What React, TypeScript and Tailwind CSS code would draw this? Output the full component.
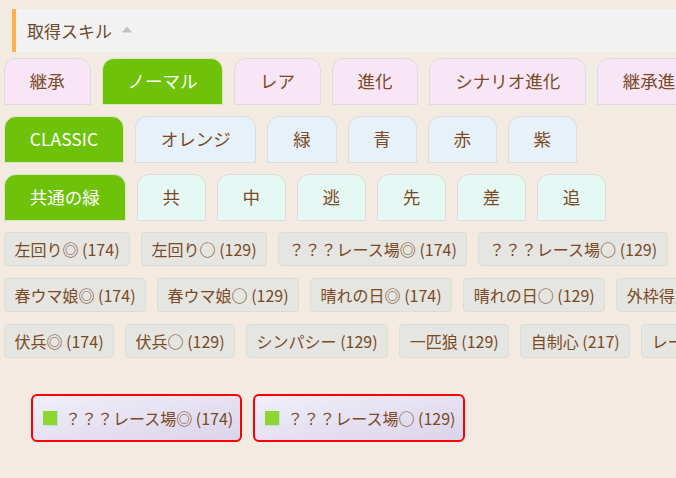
import React from "react";

const font = { fontFamily: '"Noto Sans CJK JP", "Noto Sans", sans-serif' };

type Tab = { label: string; active?: boolean };

const row1: Tab[] = [
  { label: "継承" },
  { label: "ノーマル", active: true },
  { label: "レア" },
  { label: "進化" },
  { label: "シナリオ進化" },
  { label: "継承進化" },
];
const row2: Tab[] = [
  { label: "CLASSIC", active: true },
  { label: "オレンジ" },
  { label: "緑" },
  { label: "青" },
  { label: "赤" },
  { label: "紫" },
];
const row3: Tab[] = [
  { label: "共通の緑", active: true },
  { label: "共" },
  { label: "中" },
  { label: "逃" },
  { label: "先" },
  { label: "差" },
  { label: "追" },
];

const chips: string[][] = [
  ["左回り◎ (174)", "左回り○ (129)", "？？？レース場◎ (174)", "？？？レース場○ (129)"],
  ["春ウマ娘◎ (174)", "春ウマ娘○ (129)", "晴れの日◎ (174)", "晴れの日○ (129)", "外枠得意○ (129)"],
  ["伏兵◎ (174)", "伏兵○ (129)", "シンパシー (129)", "一匹狼 (129)", "自制心 (217)", "レースプラン (129)"],
];

function TabRow({ tabs, bg }: { tabs: Tab[]; bg: string }) {
  return (
    <div className="flex flex-nowrap gap-[11px] pl-[4px]">
      {tabs.map((t) => (
        <div
          key={t.label}
          className={
            "shrink-0 h-[47px] flex items-center justify-center px-[24.8px] rounded-t-[12px] border text-[17.5px] whitespace-nowrap " +
            (t.active
              ? "bg-[#6ec30a] border-[#d6e8c0] text-white"
              : bg + " border-[#dcdcdc] text-[#7b4a25]")
          }
        >
          {t.label}
        </div>
      ))}
    </div>
  );
}

export default function App() {
  return (
    <div className="w-[676px] h-[478px] overflow-hidden bg-[#f3ebe1]" style={font}>
      <div className="pt-[9px] pl-[12px]">
        <div className="h-[43px] bg-[#f2f2f2] border-l-[4px] border-[#ffb04f] flex items-center pl-[11px]">
          <span className="text-[17px] text-[#6b4a30]">取得スキル</span>
          <svg className="ml-[10px] mb-[3px]" width="10" height="7" viewBox="0 0 10 7">
            <path d="M1 6 L5 1.5 L9 6 Z" fill="#c2c2c2" stroke="#c2c2c2" strokeWidth="1.2" strokeLinejoin="round" />
          </svg>
        </div>
      </div>
      <div className="mt-[6px] flex flex-col gap-[11px] overflow-hidden">
        <TabRow tabs={row1} bg="bg-[#f8e6f7]" />
        <TabRow tabs={row2} bg="bg-[#e7f1f9]" />
        <TabRow tabs={row3} bg="bg-[#e5f8f3]" />
      </div>
      <div className="mt-[11px] flex flex-col gap-[12px] pl-[4px] overflow-hidden">
        {chips.map((row, i) => (
          <div key={i} className="flex flex-nowrap gap-[11px]">
            {row.map((c) => (
              <div
                key={c}
                className="shrink-0 h-[34px] flex items-center px-[9.5px] rounded-[4px] border border-[#dcdcd8] bg-[#e5e5e1] text-[16px] text-[#7b4a25] whitespace-nowrap"
              >
                {c}
              </div>
            ))}
          </div>
        ))}
      </div>
      <div className="mt-[36px] pl-[31px] flex gap-[11px]">
        {["？？？レース場◎ (174)", "？？？レース場○ (129)"].map((c) => (
          <div
            key={c}
            className="h-[48px] flex items-center pl-[10px] pr-[7px] rounded-[6px] border-2 border-[#ff0000] bg-gradient-to-br from-[#f1eff9] to-[#dad4ea] text-[16px] text-[#7b4a25] whitespace-nowrap"
          >
            <span className="w-[15px] h-[15px] bg-[#8fd530] border-r border-b border-[#b8e4ee] mr-[7px]" />
            {c}
          </div>
        ))}
      </div>
    </div>
  );
}
